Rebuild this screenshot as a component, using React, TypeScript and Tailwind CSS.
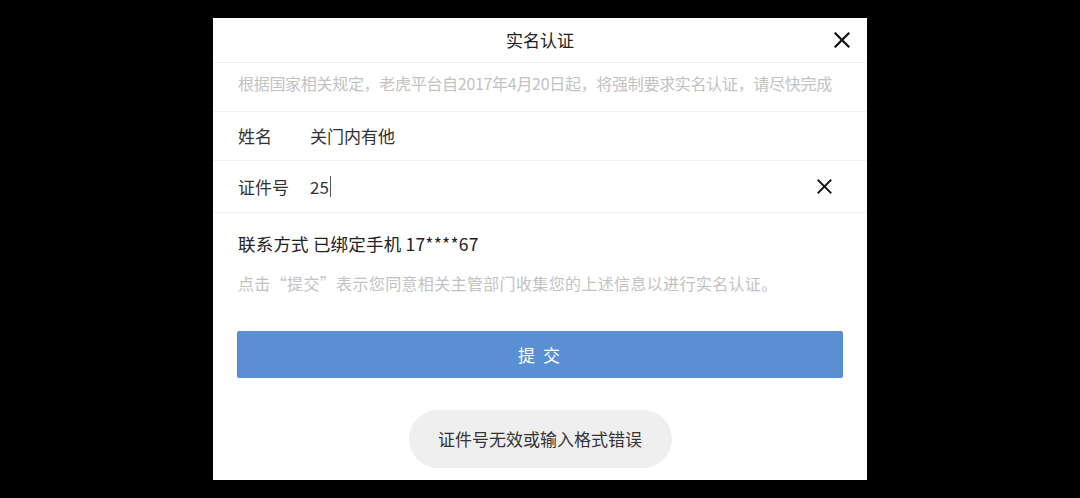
const FONT = "font-['Noto_Sans_CJK_SC','Noto_Sans',sans-serif]"

function CloseIcon({ size, stroke }: { size: number; stroke: number }) {
  return (
    <svg width={size} height={size} viewBox="0 0 16 16" fill="none">
      <path d="M1.5 1.5 L14.5 14.5 M14.5 1.5 L1.5 14.5" stroke="#111" strokeWidth={stroke} strokeLinecap="square" />
    </svg>
  )
}

export default function App() {
  return (
    <div className={`flex h-[498px] w-[1080px] justify-center bg-black pt-[18px] ${FONT}`}>
      <div className="flex h-[462px] w-[654px] flex-col bg-white">
        {/* Header */}
        <div className="grid h-[45px] grid-cols-[1fr_auto_1fr] items-center border-b border-[#ececec]">
          <div />
          <div className="text-[17px] text-[#222]">实名认证</div>
          <div className="flex justify-end pr-[17px]">
            <CloseIcon size={16} stroke={2.2} />
          </div>
        </div>

        {/* Notice */}
        <div className="flex h-[49px] items-center whitespace-nowrap border-b border-[#f2f2f2] px-[25px] pb-[8px] text-[16px] tracking-[-0.3px] text-[#c2c2c2]">
          根据国家相关规定，老虎平台自2017年4月20日起，将强制要求实名认证，请尽快完成
        </div>

        {/* Name */}
        <div className="flex h-[49px] items-center border-b border-[#f2f2f2] px-[25px] text-[17px] text-[#333]">
          <span className="w-[72px]">姓名</span>
          <span>关门内有他</span>
        </div>

        {/* ID number */}
        <div className="flex h-[52px] items-center border-b border-[#f2f2f2] pl-[25px] pr-[35px] text-[17px] text-[#333]">
          <span className="w-[72px]">证件号</span>
          <span className="flex items-center">
            25
            <span className="ml-[1px] inline-block h-[21px] w-[1px] bg-[#555]" />
          </span>
          <span className="ml-auto">
            <CloseIcon size={15} stroke={2} />
          </span>
        </div>

        {/* Contact */}
        <div className="px-[25px] pt-[19px] text-[17.5px] leading-[24px] tracking-[0.2px] text-[#222]">
          联系方式 已绑定手机 17****67
        </div>
        <div className="mt-[16px] whitespace-nowrap px-[25px] text-[16px] leading-[22px] tracking-[0.35px] text-[#c2c2c2]">
          点击“提交”表示您同意相关主管部门收集您的上述信息以进行实名认证。
        </div>

        {/* Submit */}
        <div className="mt-[37px] px-[24px]">
          <button className="flex h-[47px] w-full items-center justify-center rounded-[2px] bg-[#5a8fd3] text-[17px] tracking-[2px] text-white">
            提 交
          </button>
        </div>

        {/* Toast */}
        <div className="mt-[32px] flex justify-center">
          <div className="flex h-[58px] w-[263px] items-center justify-center rounded-full bg-[#efefef] text-[17px] text-[#333]">
            证件号无效或输入格式错误
          </div>
        </div>
      </div>
    </div>
  )
}
